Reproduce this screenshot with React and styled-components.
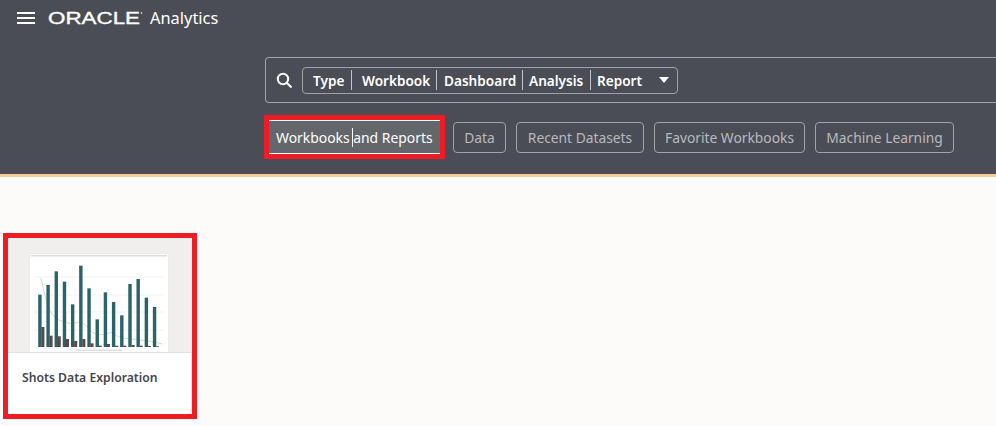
import React from "react";
import styled, { createGlobalStyle } from "styled-components";

const GlobalStyle = createGlobalStyle`
  html, body {
    margin: 0;
    padding: 0;
    background: #fcfbf9;
    font-family: "Noto Sans", "Open Sans", sans-serif;
  }
`;

const Page = styled.div`
  width: 996px;
  height: 426px;
  overflow: hidden;
`;

const Header = styled.header`
  height: 174px;
  box-sizing: border-box;
  background: #4a4d55;
  display: flex;
  flex-direction: column;
`;

const Accent = styled.div`
  height: 3px;
  background: #f6cb98;
`;

const TopBar = styled.div`
  height: 36px;
  display: flex;
  align-items: center;
  padding-left: 17px;
`;

const Burger = styled.div`
  width: 18px;
  height: 12px;
  display: flex;
  flex-direction: column;
  justify-content: space-between;
  margin-right: 13px;

  span {
    display: block;
    height: 2px;
    background: #fff;
  }
`;

const LogoSvg = styled.svg`
  display: block;
  margin-right: 6px;
`;

const Product = styled.span`
  color: #fff;
  font-size: 16.4px;
  line-height: 20px;
`;

const SearchArea = styled.div`
  margin-top: 21px;
  margin-left: 265px;
  height: 46px;
  box-sizing: border-box;
  border: 1px solid #a0a2a6;
  border-right: 0;
  border-radius: 4px 0 0 4px;
  display: flex;
  align-items: center;
  padding-left: 10px;
`;

const SearchIcon = styled.svg`
  display: block;
  margin-right: 9px;
`;

const Chips = styled.div`
  height: 27px;
  width: 376px;
  box-sizing: border-box;
  border: 1px solid #a0a2a6;
  border-radius: 4px;
  display: flex;
  align-items: center;
`;

const Chip = styled.span`
  box-sizing: border-box;
  width: ${(p) => p.$w}px;
  padding-left: ${(p) => p.$pad}px;
  height: 20px;
  line-height: 22px;
  color: #fff;
  font-size: 13.6px;
  font-weight: 600;
  white-space: nowrap;
  border-right: ${(p) => (p.$last ? "0" : "1px solid #c4c5c8")};
`;

const Caret = styled.span`
  width: 0;
  height: 0;
  margin-left: 6px;
  border-left: 5px solid transparent;
  border-right: 5px solid transparent;
  border-top: 6px solid #fff;
`;

const Tabs = styled.div`
  margin-top: 12px;
  margin-left: 264px;
  display: flex;
  align-items: center;
`;

const Highlight = styled.div`
  border: 5px solid #ee1c25;
  margin-right: 8px;
`;

const ActiveTab = styled.div`
  box-sizing: border-box;
  width: 171px;
  height: 34px;
  background: #63666a;
  border-top: 1px solid #fff;
  border-bottom: 1px solid #fff;
  padding-left: 7px;
  color: #fff;
  font-size: 13.9px;
  line-height: 33px;
  white-space: nowrap;
  position: relative;
`;

const Cursor = styled.i`
  position: absolute;
  left: 83px;
  top: 7px;
  width: 1px;
  height: 19px;
  background: #fff;
`;

const Tab = styled.div`
  box-sizing: border-box;
  width: ${(p) => p.$w}px;
  height: 31px;
  margin-right: 10px;
  border: 1px solid #a0a2a6;
  border-radius: 4px;
  color: #b9babd;
  font-size: 13.8px;
  line-height: 30px;
  text-align: center;
  white-space: nowrap;
`;

const Content = styled.main`
  padding: 56px 0 0 3px;
`;

const CardFrame = styled.div`
  width: 184px;
  border: 5px solid #ee1c25;
`;

const Card = styled.article`
  height: 176px;
  background: #fff;
  border-radius: 0 4px 4px 0;
  display: flex;
  flex-direction: column;
  box-shadow: inset -1px 0 0 #e4e3e0;
`;

const Preview = styled.div`
  height: 115px;
  box-sizing: border-box;
  padding: 16px 23px 0 22px;
  background: #f0efed;
  border-bottom: 1px solid #e2e1de;
`;

const Thumb = styled.svg`
  display: block;
  background: #fff;
  box-shadow: 0 0 1px #dcdbd8;
`;

const Title = styled.h3`
  margin: 0;
  padding: 17px 0 0 14px;
  color: #45454c;
  font-size: 12.2px;
  line-height: 16px;
  font-weight: 600;
  white-space: nowrap;
`;

const chips = [
  { label: "Type", w: 49, pad: 10 },
  { label: "Workbook", w: 85, pad: 10 },
  { label: "Dashboard", w: 86, pad: 7 },
  { label: "Analysis", w: 68, pad: 6 },
  { label: "Report", w: 62, pad: 6, last: true },
];

const tabs = [
  { label: "Data", w: 53 },
  { label: "Recent Datasets", w: 128 },
  { label: "Favorite Workbooks", w: 151 },
  { label: "Machine Learning", w: 139 },
];

const teal = [135, 106, 65, 96, 164, 48, 116, 209, 128, 157, 197, 103, 88, 144, 172];
const brown = [232, 258, 260, 268, 274, 268, 281, 288, 283, 288, 288, 286, 288, 289, 290];

const Chart = () => (
  <Thumb width="138" height="98" viewBox="0 0 138 98">
    <defs>
      <filter id="soft" x="-5%" y="-5%" width="110%" height="110%">
        <feGaussianBlur stdDeviation="0.45" />
      </filter>
    </defs>
    <g filter="url(#soft)">
      <rect x="1" y="1" width="136" height="1.5" fill="#dcdcdc" />
      {[23, 41, 58, 76].map((y) => (
        <line key={y} x1="4" x2="134" y1={y} y2={y} stroke="#f3f3f3" />
      ))}
      <path
        d="M11 24 C14 38 17 52 22 60 C28 68 36 68 42 70 C48 68 52 66 58 74 C64 82 72 82 82 78 C88 86 100 84 110 86 C118 87 126 88 132 90"
        fill="none"
        stroke="#c6dcb8"
        strokeWidth="0.9"
      />
      {teal.map((top, i) => {
        const h = (292 - top) / 3;
        return <rect key={i} x={8.2 + i * 8.19} y={93 - h} width="3.4" height={h} fill="#2a6469" />;
      })}
      {brown.map((top, i) => {
        const h = (292 - top) / 3;
        return <rect key={i} x={11.4 + i * 8.19} y={93 - h} width="3" height={h} fill="#5a4843" />;
      })}
      <rect x="46" y="95.5" width="46" height="1.5" fill="#dedede" />
    </g>
  </Thumb>
);

const App = () => (
  <Page>
    <GlobalStyle />
    <Header>
      <TopBar>
        <Burger>
          <span />
          <span />
          <span />
        </Burger>
        <LogoSvg width="96" height="20" viewBox="0 0 96 20">
          <text
            x="0"
            y="16"
            fontFamily="Liberation Sans"
            fontSize="16.5"
            fill="#fff"
            stroke="#fff"
            strokeWidth="0.35"
            textLength="92"
            lengthAdjust="spacingAndGlyphs"
          >
            ORACLE
          </text>
          <circle cx="93.5" cy="5" r="0.8" fill="#fff" />
        </LogoSvg>
        <Product>Analytics</Product>
      </TopBar>
      <SearchArea>
        <SearchIcon width="17" height="17" viewBox="0 0 17 17">
          <circle cx="7" cy="7" r="5.2" fill="none" stroke="#fff" strokeWidth="2" />
          <line x1="11" y1="11" x2="15.5" y2="15.5" stroke="#fff" strokeWidth="2" />
        </SearchIcon>
        <Chips>
          {chips.map((c) => (
            <Chip key={c.label} $w={c.w} $pad={c.pad} $last={c.last}>
              {c.label}
            </Chip>
          ))}
          <Caret />
        </Chips>
      </SearchArea>
      <Tabs>
        <Highlight>
          <ActiveTab>
            Workbooks and Reports
            <Cursor />
          </ActiveTab>
        </Highlight>
        {tabs.map((t) => (
          <Tab key={t.label} $w={t.w}>
            {t.label}
          </Tab>
        ))}
      </Tabs>
    </Header>
    <Accent />
    <Content>
      <CardFrame>
        <Card>
          <Preview>
            <Chart />
          </Preview>
          <Title>Shots Data Exploration</Title>
        </Card>
      </CardFrame>
    </Content>
  </Page>
);

export default App;
